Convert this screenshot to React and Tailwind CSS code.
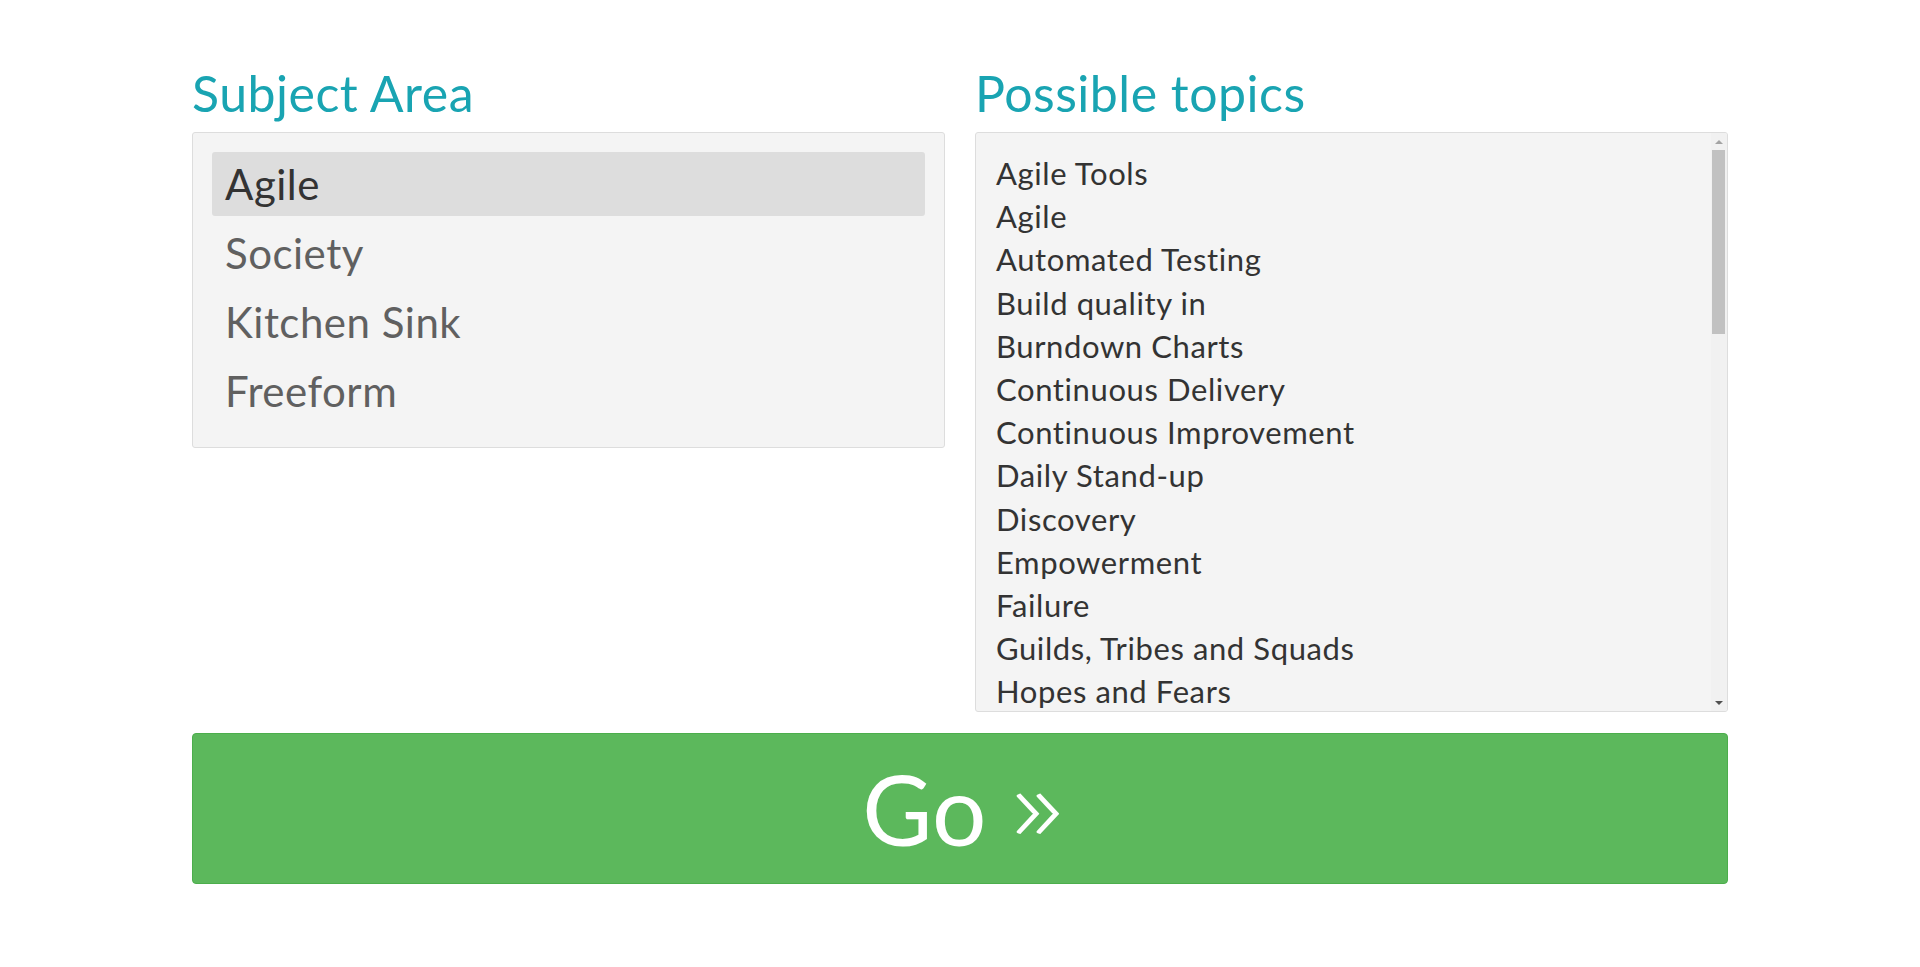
import React, { useState } from 'react';

const subjects = ['Agile', 'Society', 'Kitchen Sink', 'Freeform'];

const topics = [
  'Agile Tools',
  'Agile',
  'Automated Testing',
  'Build quality in',
  'Burndown Charts',
  'Continuous Delivery',
  'Continuous Improvement',
  'Daily Stand-up',
  'Discovery',
  'Empowerment',
  'Failure',
  'Guilds, Tribes and Squads',
  'Hopes and Fears',
];

const App = () => {
  const [subject, setSubject] = useState('Agile');

  return (
    <div className="min-h-screen bg-white font-['Lato','Liberation_Sans',sans-serif]">
      <div className="w-[1536px] mx-auto pt-[66px]">
        <div className="grid grid-cols-2 gap-[30px]">
          {/* Subject area */}
          <div>
            <h2 className="text-[50px] leading-[55px] text-[#19a4b2] mb-[11px] tracking-[0.5px]">Subject Area</h2>
            <div className="bg-[#f4f4f4] border border-[#dddddd] rounded-[3px] px-[19px] py-[19px]">
              {subjects.map((s) => (
                <div
                  key={s}
                  onClick={() => setSubject(s)}
                  className={
                    s === subject
                      ? 'h-16 mb-[5px] px-[13px] flex items-center rounded-[3px] bg-[#dddddd] text-[#333333] text-[42px] tracking-[0.5px] cursor-pointer'
                      : 'h-16 mb-[5px] px-[13px] flex items-center rounded-[3px] text-[#606060] text-[42px] tracking-[0.5px] cursor-pointer'
                  }
                >
                  {s}
                </div>
              ))}
            </div>
          </div>

          {/* Possible topics */}
          <div>
            <h2 className="text-[50px] leading-[55px] text-[#19a4b2] mb-[11px] tracking-[0.5px]">Possible topics</h2>
            <div className="h-[580px] flex bg-[#f4f4f4] border border-[#dddddd] rounded-[3px] overflow-hidden">
              <div className="flex-1 pl-5 pt-[19px]">
                {topics.map((t) => (
                  <div key={t} className="text-[31px] leading-[43.2px] text-[#333333] tracking-[0.6px]">
                    {t}
                  </div>
                ))}
              </div>
              {/* scrollbar */}
              <div className="w-[16px] flex flex-col bg-[#f1f1f1]">
                <div className="h-[17px] flex items-center justify-center">
                  <div className="w-0 h-0 border-x-[4px] border-x-transparent border-b-[4px] border-b-[#a3a3a3]"></div>
                </div>
                <div className="h-[184px] ml-px mr-[2px] bg-[#c1c1c1]"></div>
                <div className="mt-auto h-[17px] flex items-center justify-center">
                  <div className="w-0 h-0 border-x-[4px] border-x-transparent border-t-[4px] border-t-[#505050]"></div>
                </div>
              </div>
            </div>
          </div>
        </div>

        <button className="mt-[21px] w-full h-[151px] bg-[#5cb85c] border border-[#4cae4c] rounded text-white flex items-center justify-center gap-[30px]">
          <span className="text-[96px] leading-[110px]">Go</span>
          <span className="inline-block text-[104px] leading-[110px] font-light scale-x-150 mb-[16px]">»</span>
        </button>
      </div>
    </div>
  );
};

export default App;
